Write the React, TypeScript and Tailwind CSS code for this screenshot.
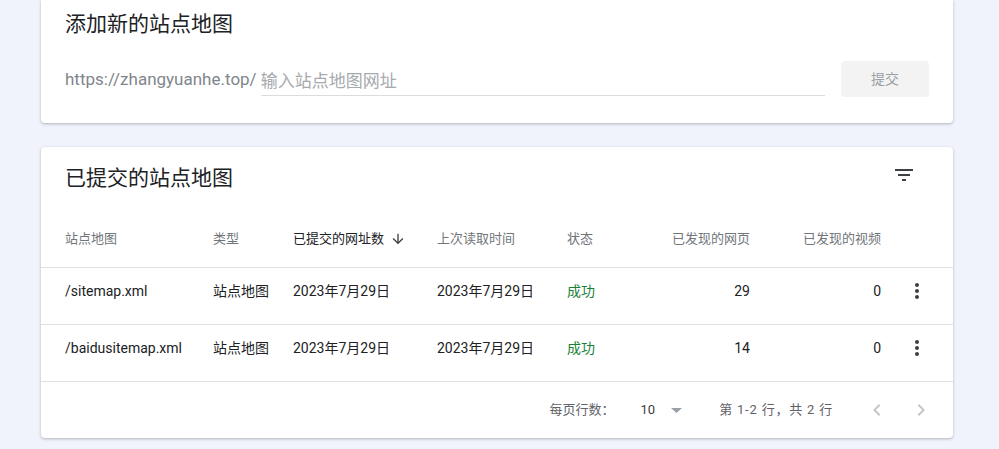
import React from 'react';

const cjk = { fontFamily: 'Roboto, "Noto Sans CJK SC", sans-serif' };

function FilterIcon() {
  return (
    <svg width="24" height="24" viewBox="0 0 24 24" className="fill-[#3c4043]">
      <path d="M10 18h4v-2h-4v2zM3 6v2h18V6H3zm3 7h12v-2H6v2z" />
    </svg>
  );
}

function MoreVert() {
  return (
    <svg width="24" height="24" viewBox="0 0 24 24" className="fill-[#3c4043]">
      <path d="M12 8c1.1 0 2-.9 2-2s-.9-2-2-2-2 .9-2 2 .9 2 2 2zm0 2c-1.1 0-2 .9-2 2s.9 2 2 2 2-.9 2-2-.9-2-2-2zm0 6c-1.1 0-2 .9-2 2s.9 2 2 2 2-.9 2-2-.9-2-2-2z" />
    </svg>
  );
}

function Chevron({ dir }: { dir: 'left' | 'right' }) {
  return (
    <svg width="24" height="24" viewBox="0 0 24 24" className="fill-[#c4c7ca]">
      {dir === 'left' ? (
        <path d="M15.41 7.41L14 6l-6 6 6 6 1.41-1.41L10.83 12z" />
      ) : (
        <path d="M10 6L8.59 7.41 13.17 12l-4.58 4.59L10 18l6-6z" />
      )}
    </svg>
  );
}

const rows = [
  { name: '/sitemap.xml', pages: 29 },
  { name: '/baidusitemap.xml', pages: 14 },
];

const grid = 'grid grid-cols-[148px_80px_144px_130px_80px_103px_131px_72px] pl-6 items-center';

export default function App() {
  return (
    <div className="min-h-screen bg-[#f0f3fc] pb-4" style={cjk}>
      <div className="ml-[41px] w-[912px] bg-white rounded-b shadow-[0_1px_3px_rgba(60,64,67,0.35)] px-6 pt-[10px] pb-[26px]">
        <h2 className="text-[21px] leading-[28px] text-[#202124]">添加新的站点地图</h2>
        <div className="mt-[23px] flex items-center">
          <span className="text-[17px] text-[#80868b] pt-[2px]">https://zhangyuanhe.top/</span>
          <div className="ml-[4px] w-[564px] border-b border-[#dadce0] pt-[6px] pb-[1px]">
            <span className="text-[17px] leading-[24px] text-[#a6a9ad]">输入站点地图网址</span>
          </div>
          <button className="ml-auto w-[88px] h-9 rounded bg-[#f3f3f3] text-[14px] text-[#9aa0a6]">提交</button>
        </div>
      </div>

      <div className="mt-6 ml-[41px] w-[912px] bg-white rounded shadow-[0_1px_3px_rgba(60,64,67,0.35)]">
        <div className="flex items-center justify-between pl-6 pr-[37px] pt-[17px] pb-[19px]">
          <h2 className="text-[21px] leading-[28px] text-[#202124]">已提交的站点地图</h2>
          <div className="-mt-[6px]">
            <FilterIcon />
          </div>
        </div>
        <div className={`${grid} h-[57px] border-b border-[#e0e0e0] text-[13px] text-[#70757a]`}>
          <div>站点地图</div>
          <div>类型</div>
          <div className="flex items-center text-[#202124]">
            已提交的网址数
            <svg width="16" height="16" viewBox="0 0 24 24" className="ml-[6px] fill-[#3c4043]">
              <path d="M20 12l-1.41-1.41L13 16.17V4h-2v12.17l-5.58-5.59L4 12l8 8 8-8z" />
            </svg>
          </div>
          <div>上次读取时间</div>
          <div>状态</div>
          <div className="text-right">已发现的网页</div>
          <div className="text-right">已发现的视频</div>
          <div />
        </div>
        {rows.map((r) => (
          <div key={r.name} className={`${grid} h-[57px] pb-[10px] border-b border-[#e0e0e0] text-[14px] text-[#202124]`}>
            <div>{r.name}</div>
            <div>站点地图</div>
            <div>2023年7月29日</div>
            <div>2023年7月29日</div>
            <div className="text-[#188038]">成功</div>
            <div className="text-right">{r.pages}</div>
            <div className="text-right">0</div>
            <div className="flex justify-center">
              <MoreVert />
            </div>
          </div>
        ))}
        <div className="h-14 flex items-center justify-end pr-[20px] text-[13px] text-[#5f6368]">
          <span>每页行数：</span>
          <span className="ml-[26px] text-[#3c4043]">10</span>
          <svg width="11" height="5" viewBox="0 0 11 5" className="ml-[16px] fill-[#9aa0a6]">
            <path d="M0 0h11L5.5 5z" />
          </svg>
          <span className="ml-[37px] tracking-[0.8px]">第 1-2 行，共 2 行</span>
          <div className="ml-[32px] flex gap-5">
            <Chevron dir="left" />
            <Chevron dir="right" />
          </div>
        </div>
      </div>
    </div>
  );
}
